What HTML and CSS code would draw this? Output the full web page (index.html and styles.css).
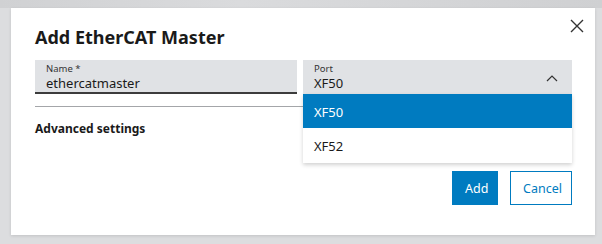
FILE: index.html
```
<!DOCTYPE html>
<html lang="en">
  <head>
    <meta charset="UTF-8">
    <title>Add EtherCAT Master</title>
    <link rel="stylesheet" href="styles.css">
  </head>
  <body>
    <div class="backdrop"></div>
    <div class="dialog">
      <button class="close" aria-label="Close">
        <svg width="14" height="14" viewBox="0 0 14 14"><path d="M1 1L13 13M13 1L1 13" stroke="#333" stroke-width="1.4" fill="none"/></svg>
      </button>
      <h2 class="title">Add EtherCAT Master</h2>
      <div class="fields">
        <div class="field name">
          <div class="label">Name *</div>
          <div class="value">ethercatmaster</div>
        </div>
        <div class="field port">
          <div class="label">Port</div>
          <div class="value">XF50</div>
          <svg class="chevron" width="12" height="7" viewBox="0 0 12 7"><path d="M1 6L6 1L11 6" stroke="#333" stroke-width="1.2" fill="none"/></svg>
          <ul class="menu">
            <li class="selected">XF50</li>
            <li>XF52</li>
          </ul>
        </div>
      </div>
      <div class="divider"></div>
      <div class="advanced">Advanced settings</div>
      <div class="actions">
        <button class="btn primary">Add</button>
        <button class="btn secondary">Cancel</button>
      </div>
    </div>
  </body>
</html>
```

FILE: styles.css
```
body {
  margin: 0;
  padding: 8px 7px 9px 11px;
  background-color: #dcdddf;
  font-family: "Noto Sans", "Open Sans", sans-serif;
  color: #1a1a1a;
}

.backdrop {
  position: absolute;
  left: 0;
  top: 0;
  right: 0;
  height: 8px;
  background: linear-gradient(90deg, #d0d1d3, #dadbdd 40%, #cfd0d2);
}

.dialog {
  position: relative;
  height: 227px;
  box-sizing: border-box;
  background-color: #fff;
  padding: 17px 23px 0 24px;
  box-shadow: 0 1px 3px rgba(0, 0, 0, 0.12);
}

.close {
  position: absolute;
  top: 11px;
  right: 11px;
  width: 14px;
  height: 14px;
  padding: 0;
  border: none;
  background: none;
}

.title {
  margin: 0 0 10px 0;
  font-size: 18px;
  line-height: 25px;
  font-weight: 700;
}

.fields {
  display: flex;
  gap: 6px;
}

.field {
  position: relative;
  height: 34px;
  box-sizing: border-box;
  background-color: #e0e2e5;
  padding: 3px 11px 0 11px;
}

.field.name {
  width: 262px;
  border-bottom: 2px solid #3c3c3c;
}

.field.port {
  flex: 1;
  padding-left: 11px;
}

.label {
  font-size: 9.5px;
  line-height: 12px;
  color: #333;
}

.value {
  font-size: 13px;
  line-height: 17px;
}

.chevron {
  position: absolute;
  right: 14px;
  top: 15px;
}

.menu {
  position: absolute;
  left: 0;
  right: 0;
  top: 34px;
  margin: 0;
  padding: 0;
  list-style: none;
  background-color: #fff;
  box-shadow: 0 2px 4px rgba(0, 0, 0, 0.18);
  z-index: 2;
}

.menu li {
  height: 34px;
  line-height: 36px;
  padding-left: 11px;
  font-size: 13px;
}

.menu li + li {
  height: 35px;
}

.menu li.selected {
  background-color: #007bc0;
  color: #fff;
}

.divider {
  width: 270px;
  height: 1px;
  margin-top: 12px;
  background-color: #a4a6a9;
}

.advanced {
  margin-top: 14px;
  font-size: 12px;
  line-height: 16px;
  font-weight: 700;
}

.actions {
  display: flex;
  justify-content: flex-end;
  gap: 12px;
  margin-top: 34px;
}

.btn {
  height: 34px;
  box-sizing: border-box;
  font-family: inherit;
  font-size: 12.5px;
  padding: 0 12px;
  border: 1px solid #007bc0;
}

.btn.primary {
  width: 46px;
  background-color: #007bc0;
  color: #fff;
}

.btn.secondary {
  width: 62px;
  background-color: #fff;
  color: #007bc0;
}
```
